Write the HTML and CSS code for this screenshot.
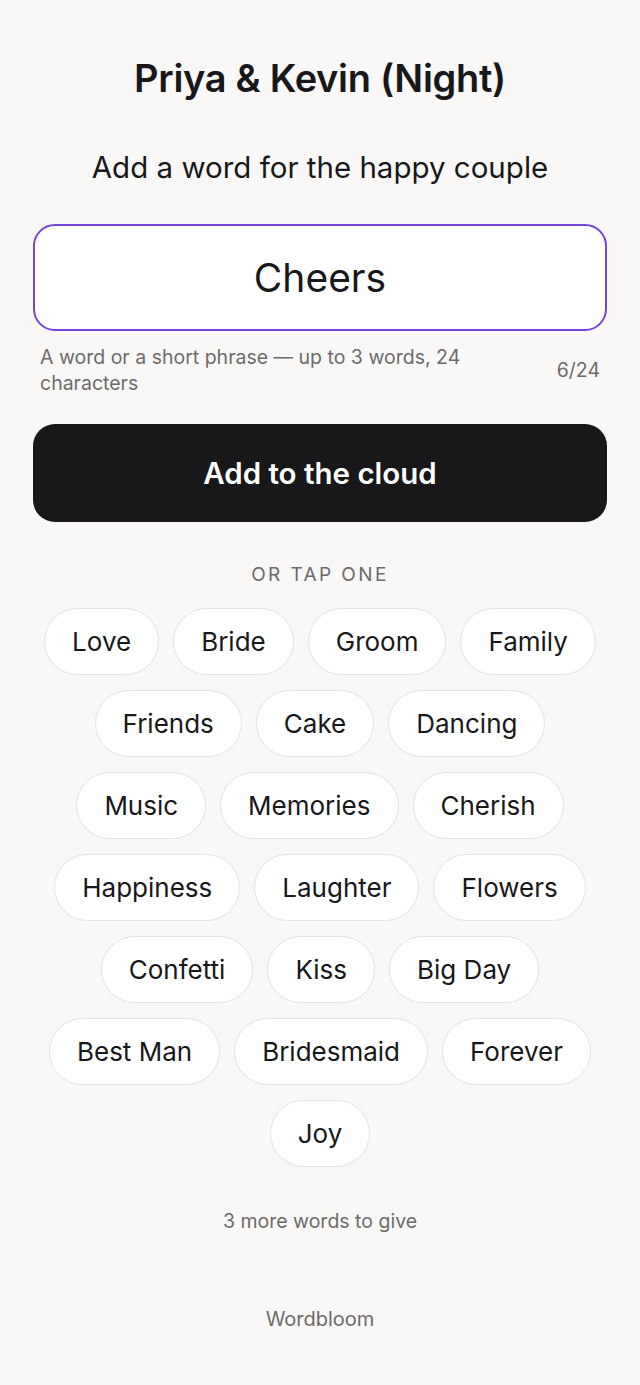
FILE: index.html
```html
<!DOCTYPE html>
<html lang="en">
<head>
<meta charset="utf-8">
<title>Wordbloom</title>
<link rel="stylesheet" href="styles.css">
</head>
<body>
<main class="page">
  <h1 class="title">Priya &amp; Kevin (Night)</h1>
  <p class="subtitle">Add a word for the happy couple</p>
  <div class="field">
    <input class="word-input" type="text" value="Cheers">
  </div>
  <div class="hint-row">
    <span class="hint">A word or a short phrase — up to 3 words, 24 characters</span>
    <span class="count">6/24</span>
  </div>
  <button class="submit">Add to the cloud</button>
  <p class="or">OR TAP ONE</p>
  <div class="chips">
    <button class="chip">Love</button>
    <button class="chip">Bride</button>
    <button class="chip">Groom</button>
    <button class="chip">Family</button>
    <button class="chip">Friends</button>
    <button class="chip">Cake</button>
    <button class="chip">Dancing</button>
    <button class="chip">Music</button>
    <button class="chip">Memories</button>
    <button class="chip">Cherish</button>
    <button class="chip">Happiness</button>
    <button class="chip">Laughter</button>
    <button class="chip">Flowers</button>
    <button class="chip">Confetti</button>
    <button class="chip">Kiss</button>
    <button class="chip">Big Day</button>
    <button class="chip">Best Man</button>
    <button class="chip">Bridesmaid</button>
    <button class="chip">Forever</button>
    <button class="chip">Joy</button>
  </div>
  <p class="remaining">3 more words to give</p>
  <footer class="brand">Wordbloom</footer>
</main>
</body>
</html>
```
FILE: styles.css
```css
* { box-sizing: border-box; }
html, body { margin: 0; padding: 0; }
body {
  background: #faf8f7;
  font-family: Inter, "Noto Sans", sans-serif;
  color: #18181b;
}
.page {
  padding: 54px 33px 40px;
  display: flex;
  flex-direction: column;
  align-items: stretch;
}
.title {
  margin: 0;
  text-align: center;
  font-size: 38px;
  font-weight: 600;
  line-height: 48px;
  letter-spacing: -0.3px;
}
.subtitle {
  margin: 47px 0 0;
  text-align: center;
  font-size: 29.5px;
  line-height: 36px;
  font-weight: 400;
}
.field { margin-top: 39px; }
.word-input {
  display: block;
  width: 100%;
  height: 107px;
  border: 2px solid #7444dc;
  border-radius: 22px;
  background: #fff;
  text-align: center;
  font-family: inherit;
  font-size: 39px;
  color: #18181b;
  outline: none;
}
.hint-row {
  display: flex;
  align-items: center;
  justify-content: space-between;
  gap: 40px;
  padding: 0 7px;
  margin-top: 13px;
}
.hint {
  font-size: 19.5px;
  line-height: 26px;
  color: #6b6b6b;
  max-width: 450px;
}
.count {
  font-size: 19.5px;
  color: #6b6b6b;
  white-space: nowrap;
}
.submit {
  margin-top: 28px;
  height: 98px;
  border: none;
  border-radius: 22px;
  background: #18181b;
  color: #fff;
  font-family: inherit;
  font-size: 29.5px;
  font-weight: 600;
}
.or {
  margin: 42px 0 0;
  text-align: center;
  font-size: 19px;
  line-height: 22px;
  letter-spacing: 2.4px;
  color: #6b6b6b;
}
.chips {
  margin-top: 22px;
  display: flex;
  flex-wrap: wrap;
  justify-content: center;
  column-gap: 14px;
  row-gap: 15px;
  padding: 0 4px;
}
.chip {
  height: 67px;
  padding: 0 27px;
  border: 1.5px solid #e6e2df;
  border-radius: 34px;
  background: #fff;
  font-family: inherit;
  font-size: 26px;
  color: #18181b;
}
.remaining {
  margin: 42px 0 0;
  text-align: center;
  font-size: 19.5px;
  line-height: 24px;
  color: #6b6b6b;
}
.brand {
  margin-top: 74px;
  text-align: center;
  font-size: 20px;
  line-height: 24px;
  color: #6b6b6b;
}
```
